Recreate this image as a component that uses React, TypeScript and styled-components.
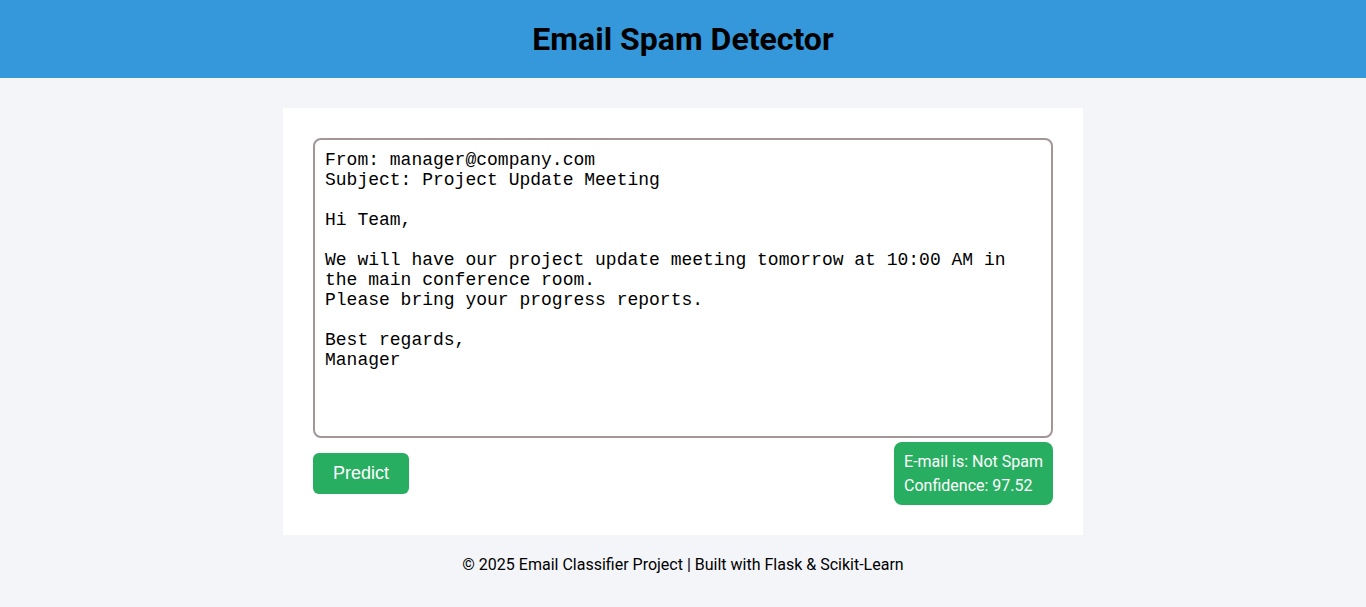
import React, { useState } from "react";
import styled, { createGlobalStyle } from "styled-components";

const GlobalStyle = createGlobalStyle`
  body {
    margin: 0;
    background: #f4f5f9;
    font-family: Roboto, "Liberation Sans", sans-serif;
    color: #000;
  }
`;

const Header = styled.header`
  background: #3498db;
  height: 78px;
  display: flex;
  align-items: center;
  justify-content: center;
  h1 {
    margin: 0;
    font-size: 32px;
    font-weight: 700;
  }
`;

const Main = styled.main`
  padding-top: 30px;
`;

const Card = styled.div`
  width: 800px;
  margin: 0 auto;
  padding: 30px;
  box-sizing: border-box;
  background: #fff;
`;

const Area = styled.textarea`
  display: block;
  width: 100%;
  height: 300px;
  box-sizing: border-box;
  padding: 10px;
  border: 2px solid #a39696;
  border-radius: 8px;
  font-family: "Liberation Mono", "Courier New", monospace;
  font-size: 18px;
  line-height: 20px;
  color: #000;
  resize: none;
  outline: none;
  overflow: hidden;
`;

const Row = styled.div`
  margin-top: 4px;
  display: flex;
  align-items: center;
  justify-content: space-between;
`;

const Button = styled.button`
  background: #27ae60;
  color: #fff;
  border: none;
  border-radius: 6px;
  width: 96px;
  height: 41px;
  font-family: "Liberation Sans", Arial, sans-serif;
  font-size: 18px;
  cursor: pointer;
`;

const Result = styled.div`
  background: #27ae60;
  color: #fff;
  border-radius: 8px;
  padding: 8px 10px 7px;
  font-size: 16px;
  line-height: 24px;
`;

const Footer = styled.footer`
  text-align: center;
  padding: 20px 0;
  font-size: 16px;
`;

const sample = `From: manager@company.com
Subject: Project Update Meeting

Hi Team,

We will have our project update meeting tomorrow at 10:00 AM in the main conference room.
Please bring your progress reports.

Best regards,
Manager`;

const App: React.FC = () => {
  const [text, setText] = useState(sample);
  return (
    <>
      <GlobalStyle />
      <Header>
        <h1>Email Spam Detector</h1>
      </Header>
      <Main>
        <Card>
          <Area value={text} onChange={(e) => setText(e.target.value)} />
          <Row>
            <Button type="button">Predict</Button>
            <Result>
              E-mail is: Not Spam
              <br />
              Confidence: 97.52
            </Result>
          </Row>
        </Card>
      </Main>
      <Footer>© 2025 Email Classifier Project | Built with Flask &amp; Scikit-Learn</Footer>
    </>
  );
};

export default App;
